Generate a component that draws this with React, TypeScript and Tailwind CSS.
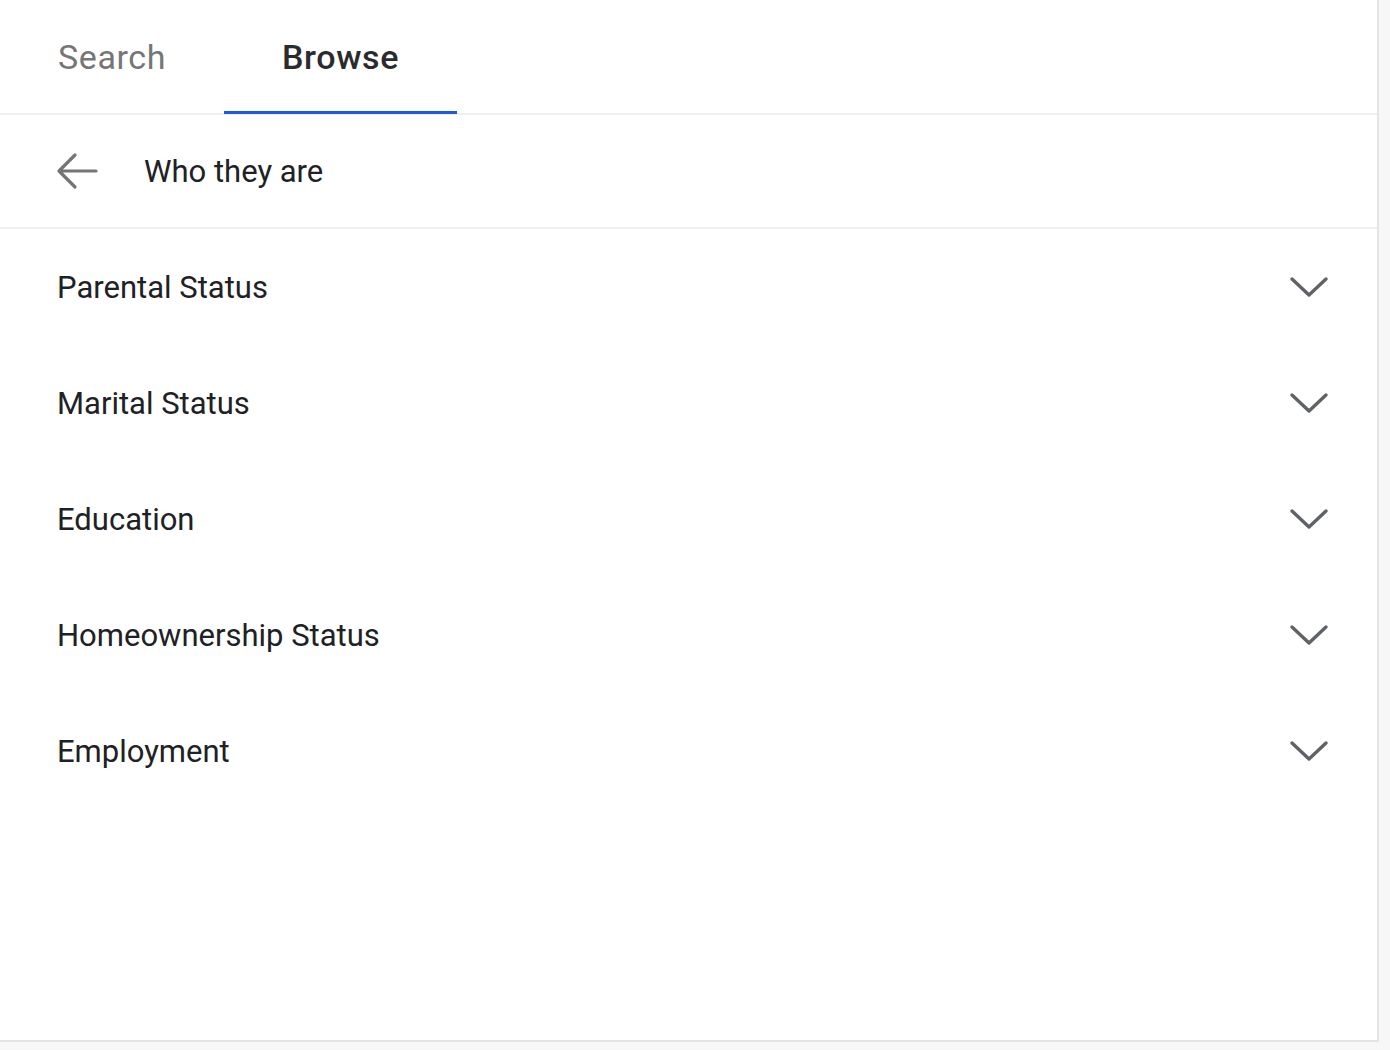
import { useState } from "react";

const sections = [
  "Parental Status",
  "Marital Status",
  "Education",
  "Homeownership Status",
  "Employment",
];

function Chevron() {
  return (
    <svg width="40" height="22" viewBox="0 0 40 22" fill="none">
      <path d="M3 3 L20 19 L37 3" stroke="#5f6368" strokeWidth="3.4" strokeLinecap="round" strokeLinejoin="round" />
    </svg>
  );
}

function BackArrow() {
  return (
    <svg width="42" height="38" viewBox="0 0 42 38" fill="none">
      <path d="M40 19 H4 M19 3 L3 19 L19 35" stroke="#757575" strokeWidth="3.2" strokeLinecap="round" strokeLinejoin="round" />
    </svg>
  );
}

export default function App() {
  const [tab, setTab] = useState("Browse");

  return (
    <div className="w-[1390px] h-[1050px] bg-[#f7f7f7] font-['Roboto',sans-serif] flex flex-col">
      <div className="flex flex-1">
        <div className="w-[1379px] bg-white border-r-2 border-b-2 border-[#e4e4e4] flex flex-col">
          <div className="flex h-[115px] border-b-2 border-[#efefef]">
            {["Search", "Browse"].map((t) => (
              <button
                key={t}
                onClick={() => setTab(t)}
                className={`relative px-[58px] pt-[2px] text-[34px] tracking-[0.6px] ${
                  tab === t ? "text-[#2a2b2e] font-medium" : "text-[#767676]"
                }`}
              >
                {t}
                {tab === t && (
                  <span className="absolute left-0 right-0 bottom-[-1px] h-[3px] bg-[#1c5ae6]" />
                )}
              </button>
            ))}
          </div>

          <div className="flex items-center h-[114px] border-b-2 border-[#efefef] pl-[56px]">
            <BackArrow />
            <span className="ml-[46px] text-[31px] text-[#202124] pt-[2px]">Who they are</span>
          </div>

          <div className="flex flex-col">
            {sections.map((s) => (
              <div key={s} className="flex items-center justify-between h-[116px] pl-[57px] pr-[48px]">
                <span className="text-[31px] text-[#202124] pt-[2px]">{s}</span>
                <Chevron />
              </div>
            ))}
          </div>
        </div>
      </div>
      <div className="h-[8px]" />
    </div>
  );
}
